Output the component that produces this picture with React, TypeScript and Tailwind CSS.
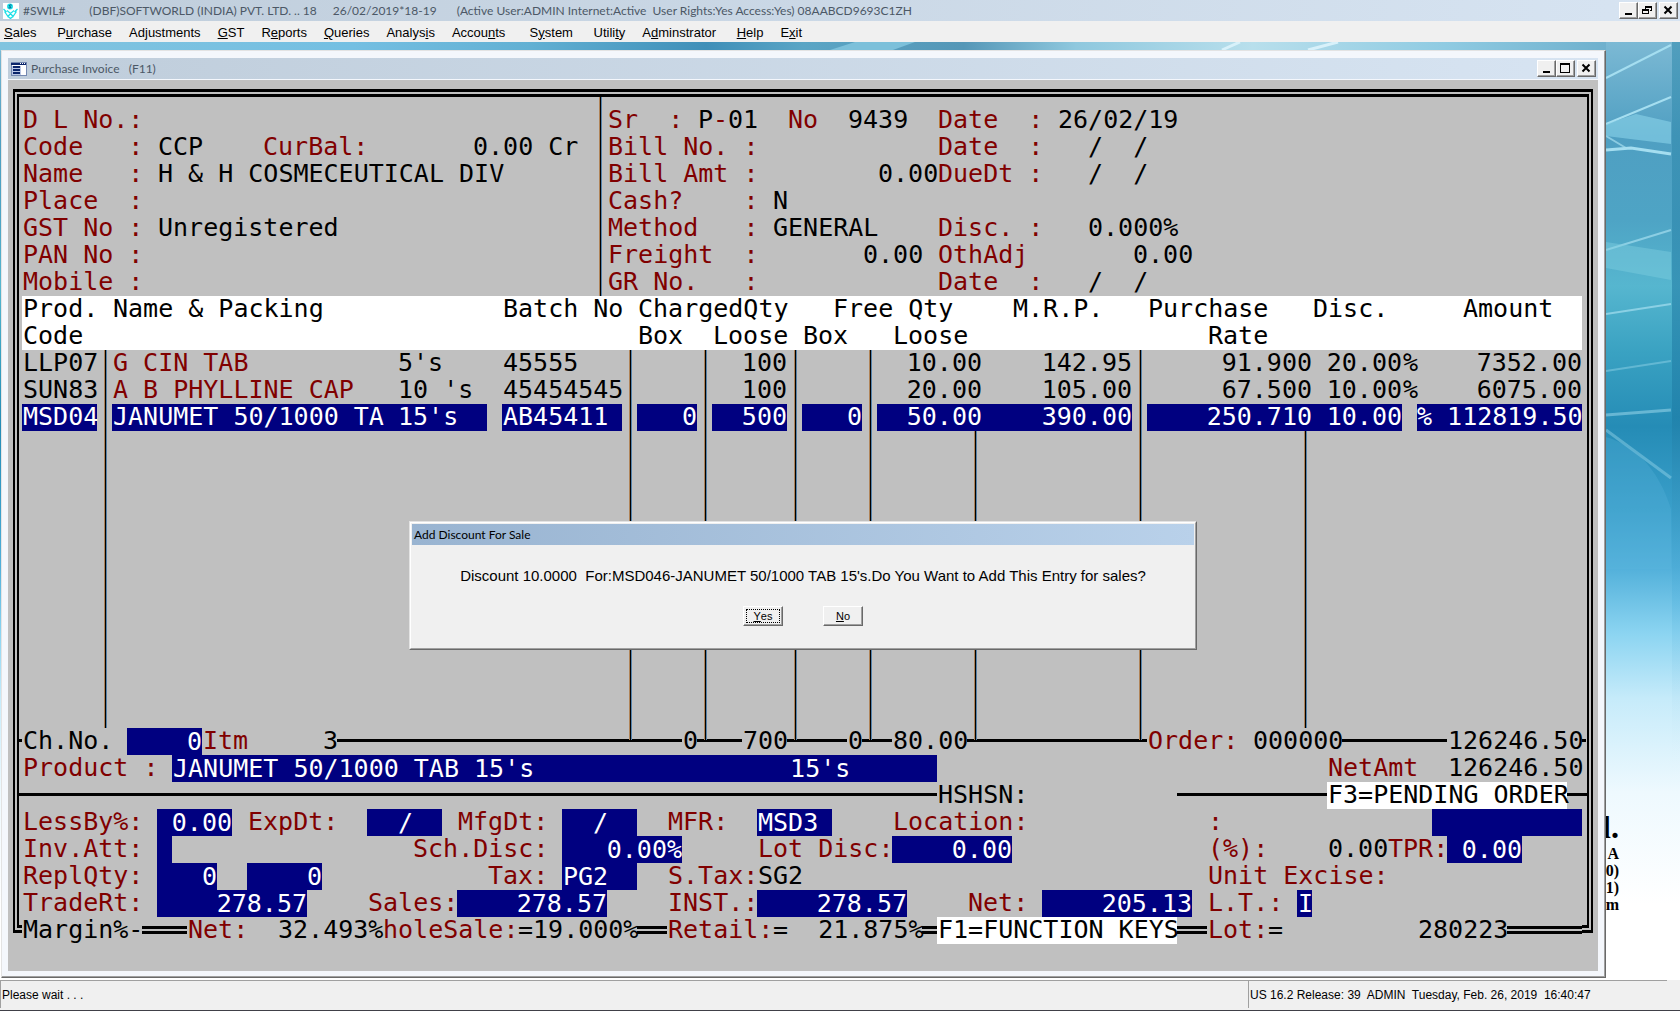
import { ReactNode } from "react";
import clsx from "clsx";

type Tone = "label" | "value" | "mark";

const TONES: Record<Tone, string> = {
  label: "text-[#800000]",
  value: "text-black",
  mark: "bg-white text-black",
};

const COLUMNS = "grid grid-cols-[repeat(104,minmax(0,1fr))]";

// every row of the screen is 104 characters wide
const cell = (at: number, span: number) => ({
  gridColumn: `${at + 1} / span ${span}`,
});

const Row = ({ children, className }: { children?: ReactNode; className?: string }) => (
  <div className={clsx(COLUMNS, "h-[27px] items-stretch", className)}>{children}</div>
);

type TextProps = { at: number; tone?: Tone; children: string };

const Text = ({ at, tone = "value", children }: TextProps) => (
  <span
    className={clsx("row-start-1 pl-px whitespace-pre", TONES[tone])}
    style={cell(at, children.length)}
  >
    {children}
  </span>
);

const Label = ({ at, htmlFor, tone = "label", children }: TextProps & { htmlFor?: string }) =>
  htmlFor ? (
    <label
      htmlFor={htmlFor}
      className={clsx("row-start-1 pl-px whitespace-pre", TONES[tone])}
      style={cell(at, children.length)}
    >
      {children}
    </label>
  ) : (
    <Text at={at} tone={tone}>
      {children}
    </Text>
  );

type FieldProps = {
  id: string;
  at: number;
  span: number;
  value?: string;
  right?: boolean;
  name?: string;
};

const Field = ({ id, at, span, value = "", right, name }: FieldProps) => (
  <input
    id={id}
    aria-label={name}
    defaultValue={value}
    className={clsx(
      "row-start-1 h-[27px] w-full min-w-0 rounded-none bg-[#000080] pb-px text-white outline-none",
      right ? "text-right" : "pl-px"
    )}
    style={cell(at, span)}
  />
);

type RuleProps = { at: number; span: number; double?: boolean; className?: string };

const Rule = ({ at, span, double, className }: RuleProps) => (
  <span
    className={clsx(
      "row-start-1 mb-0.5 self-center border-black",
      double ? "h-2 border-y-[3px]" : "border-t-[3px]",
      className
    )}
    style={cell(at, span)}
  />
);

const BAR = "row-start-1 ml-0.5 w-[3px] justify-self-center border-x border-l-[#b08458] border-r-[#5583ac] bg-black";

const Bar = ({ at, className }: { at: number; className?: string }) => (
  <span className={clsx(BAR, className)} style={cell(at, 1)} />
);

const MENU = [
  ["", "S", "ales "],
  ["P", "u", "rchase"],
  ["Ad", "j", "ustments"],
  ["", "G", "ST"],
  ["R", "e", "ports"],
  ["", "Q", "ueries"],
  ["Analys", "i", "s"],
  ["Accou", "n", "ts"],
  ["  S", "y", "stem"],
  [" Utili", "t", "y"],
  ["A", "d", "minstrator"],
  [" ", "H", "elp"],
  ["E", "x", "it"],
];

const SEPARATORS = [5, 40, 45, 51, 56, 74];

const ITEMS = [
  {
    code: "LLP07",
    name: "G CIN TAB",
    pack: "5's",
    batch: "45555",
    box: "",
    loose: "100",
    freeBox: "",
    free: "10.00",
    mrp: "142.95",
    rate: "91.900",
    disc: "20.00",
    sign: "%",
    amount: "7352.00",
  },
  {
    code: "SUN83",
    name: "A B PHYLLINE CAP",
    pack: "10 's",
    batch: "45454545",
    box: "",
    loose: "100",
    freeBox: "",
    free: "20.00",
    mrp: "105.00",
    rate: "67.500",
    disc: "10.00",
    sign: "%",
    amount: "6075.00",
  },
  {
    code: "MSD04",
    name: "JANUMET 50/1000 TA",
    pack: "15's",
    batch: "AB45411",
    box: "0",
    loose: "500",
    freeBox: "0",
    free: "50.00",
    mrp: "390.00",
    rate: "250.710",
    disc: "10.00",
    sign: "",
    amount: "% 112819.50",
    selected: true,
  },
];

const FIELDS: { key: keyof (typeof ITEMS)[number]; at: number; span: number; right?: boolean }[] = [
  { key: "code", at: 0, span: 5 },
  { key: "name", at: 6, span: 19 },
  { key: "pack", at: 25, span: 6 },
  { key: "batch", at: 32, span: 8 },
  { key: "box", at: 41, span: 4, right: true },
  { key: "loose", at: 46, span: 5, right: true },
  { key: "freeBox", at: 52, span: 4, right: true },
  { key: "free", at: 57, span: 7, right: true },
  { key: "mrp", at: 64, span: 10, right: true },
  { key: "rate", at: 75, span: 11, right: true },
  { key: "disc", at: 86, span: 6, right: true },
  { key: "sign", at: 92, span: 1 },
  { key: "amount", at: 93, span: 11, right: true },
];

const HEADINGS = [
  [
    { at: 0, text: "Prod." },
    { at: 6, text: "Name & Packing" },
    { at: 32, text: "Batch No" },
    { at: 41, text: "ChargedQty" },
    { at: 54, text: "Free Qty" },
    { at: 66, text: "M.R.P." },
    { at: 75, text: "Purchase" },
    { at: 86, text: "Disc." },
    { at: 96, text: "Amount" },
  ],
  [
    { at: 0, text: "Code" },
    { at: 41, text: "Box" },
    { at: 46, text: "Loose" },
    { at: 52, text: "Box" },
    { at: 58, text: "Loose" },
    { at: 79, text: "Rate" },
  ],
];

const WindowButton = ({ label, children, className }: { label: string; children: ReactNode; className?: string }) => (
  <button
    type="button"
    aria-label={label}
    className={clsx(
      "flex h-[17px] w-[19px] items-center justify-center border border-t-white border-l-white border-r-[#696969] border-b-[#696969] bg-[#f0f0f0] shadow-[inset_-1px_-1px_0_#a0a0a0]",
      className
    )}
  >
    <svg width="13" height="11" viewBox="0 0 13 11" fill="none" stroke="#000" shapeRendering="crispEdges">
      {children}
    </svg>
  </button>
);

const MinimizeIcon = <path d="M3 9h7" strokeWidth="2" />;
const RestoreIcon = (
  <>
    <path d="M4 1.5h7M4.5 1v3M10.5 1v5M9 5.5h2M4 2.5h7" />
    <path d="M1 4.5h7M1 5.5h7M1.5 4v5M7.5 4v5M1 8.5h7" />
  </>
);
const MaximizeIcon = <path d="M1 .5h10M1 1.5h10M1.5 1v9M10.5 1v9M1 9.500h10" />;
const CloseIcon = <path d="M2.500 1.500l7 7M9.500 1.500l-7 7" strokeWidth="2" shapeRendering="auto" />;

const Logo = () => (
  <svg width="16" height="16" viewBox="0 0 16 16" className="shrink-0 bg-white" fill="none" stroke="#1fe0e8">
    <circle cx="7" cy="3.500" r="3" fill="#1fe0e8" stroke="none" />
    <path d="M8.500 2.200c-2-1-3 .8-1.500 1.300s1 2-1.300 1.200" stroke="#0a4a80" />
    <path d="M.5 6l3 3M1.500 8.500l3.500 5 2.500-3 2.500 3 3.500-5M14.500 6l-3 3M4 7.500l3.500 3 3.500-3" strokeWidth="1.300" />
    <path d="M5 13.500l2.500 2 2.500-2" strokeWidth="1.300" />
  </svg>
);

const FormIcon = () => (
  <svg width="16" height="14" viewBox="0 0 16 14" className="shrink-0" shapeRendering="crispEdges">
    <rect x="0" y="0" width="16" height="14" fill="#7488b0" />
    <rect x="1" y="3" width="14" height="10" fill="#fff" />
    <rect x="0" y="1" width="15" height="2" fill="#0a246a" />
    <path d="M9 1.500h1M11 1.500h1M13 1.500h1" stroke="#fff" />
    <rect x="1" y="4" width="9" height="9" fill="#b9c6e4" />
    <path d="M2 5h7M2 8h7M2 11h7" stroke="#0a246a" strokeWidth="2" />
  </svg>
);

const Wallpaper = () => (
  <svg
    className="absolute inset-0 h-full w-full"
    viewBox="0 0 1680 938"
    preserveAspectRatio="none"
    aria-hidden="true"
  >
    <defs>
      <linearGradient id="sky" x1="0" y1="0" x2="0" y2="1">
        <stop offset="0" stopColor="#7cb9d4" />
        <stop offset=".1" stopColor="#4f9fc2" />
        <stop offset=".19" stopColor="#4ea4c5" />
        <stop offset=".26" stopColor="#56b6cf" />
        <stop offset=".33" stopColor="#3aa2c2" />
        <stop offset=".41" stopColor="#258cb6" />
        <stop offset=".5" stopColor="#3a9fca" />
        <stop offset=".56" stopColor="#52b0da" />
        <stop offset=".63" stopColor="#8bd4f1" />
        <stop offset=".7" stopColor="#c6ebfa" />
        <stop offset=".8" stopColor="#eef9fe" />
        <stop offset=".92" stopColor="#fff" />
      </linearGradient>
      <linearGradient id="top" x1="0" y1="0" x2="1" y2="0">
        <stop offset="0" stopColor="#82c4df" />
        <stop offset=".22" stopColor="#74bfe2" />
        <stop offset=".33" stopColor="#62b0d3" />
        <stop offset=".44" stopColor="#3f8fb8" />
        <stop offset=".5" stopColor="#5aa5c5" />
        <stop offset=".6" stopColor="#5597b7" />
        <stop offset=".67" stopColor="#8fc8de" />
        <stop offset=".78" stopColor="#b8dfec" />
        <stop offset=".9" stopColor="#8fcbe2" />
        <stop offset="1" stopColor="#6fb0cd" />
      </linearGradient>
      <linearGradient id="edge" x1="0" y1="0" x2="0" y2="1">
        <stop offset="0" stopColor="#3f93b4" stopOpacity=".7" />
        <stop offset=".4" stopColor="#1f7fa8" stopOpacity=".7" />
        <stop offset=".6" stopColor="#4fb0dc" stopOpacity=".3" />
        <stop offset=".8" stopColor="#fff" stopOpacity="0" />
      </linearGradient>
    </defs>
    <rect width="1680" height="938" fill="url(#sky)" />
    <rect width="1606" height="9" fill="url(#top)" />
    <path d="M830 8l25-8h60l-22 8z" fill="#7cc0da" />
    <path d="M1222 8l18-8M1308 8l30-8" stroke="#d8f1fa" strokeWidth="3" />
    <g stroke="#a5def0" fill="none">
      <path d="M1606 36l65-33" strokeWidth="2" />
      <path d="M1606 82l65-27" strokeWidth="2" />
      <path d="M1606 108l25-2 40 6" strokeWidth="3" />
      <path d="M1606 94l20 12" strokeWidth="2" opacity=".7" />
      <path d="M1606 208l65-20" strokeWidth="2" opacity=".7" />
      <path d="M1606 272l65-10" strokeWidth="2" opacity=".7" />
      <path d="M1606 329l65-10" strokeWidth="2" opacity=".4" />
      <path d="M1606 373l65-5" strokeWidth="3" opacity=".5" />
      <path d="M1606 388l65 48" strokeWidth="3" opacity=".4" />
    </g>
    <path d="M1606 82l30-10 35 8v22l-65-8z" fill="#8ad3e9" opacity=".6" />
    <path d="M1606 200l65 10v28l-65-12z" fill="#7fcfe0" opacity=".45" />
    <path d="M1606 395c35 10 55 40 65 72v60h-65z" fill="#5fb9de" opacity=".25" />
    <rect x="1672" y="0" width="8" height="938" fill="url(#edge)" />
  </svg>
);

const Desktop = ({ children }: { children: ReactNode }) => (
  <main className="relative flex-1 overflow-hidden pt-2 pl-px">
    <Wallpaper />
    <div className="relative flex">
      {children}
      <div
        aria-hidden="true"
        className="flex w-[74px] shrink-0 flex-col overflow-hidden pt-[759px] font-['Liberation_Serif',serif] text-base leading-[17px] font-bold text-black"
      >
        <div className="flex w-[13px] flex-col items-end">
          <span className="text-[32px] leading-9">l.</span>
          <span>A</span>
          <span>0)</span>
          <span>1)</span>
          <span>m</span>
        </div>
      </div>
    </div>
  </main>
);

const InvoiceHeader = () => (
  <section>
    <Row>
      <Label at={0}>D L No.:</Label>
      <Bar at={38} className="-mt-[10px]" />
      <Label at={39}>Sr  :</Label>
      <Text at={45}>P</Text>
      <Label at={46}>-</Label>
      <Text at={47}>01</Text>
      <Label at={51}>No</Label>
      <Text at={55}>9439</Text>
      <Label at={61}>Date  :</Label>
      <Text at={69}>26/02/19</Text>
    </Row>
    <Row>
      <Label at={0}>Code   :</Label>
      <Text at={9}>CCP</Text>
      <Label at={16}>CurBal:</Label>
      <Text at={30}>0.00 Cr</Text>
      <Bar at={38} />
      <Label at={39}>Bill No. :</Label>
      <Label at={61}>Date  :</Label>
      <Text at={69}>{"  /  /  "}</Text>
    </Row>
    <Row>
      <Label at={0}>Name   :</Label>
      <Text at={9}>{"H & H COSMECEUTICAL DIV"}</Text>
      <Bar at={38} />
      <Label at={39}>Bill Amt :</Label>
      <Text at={57}>0.00</Text>
      <Label at={61}>DueDt :</Label>
      <Text at={69}>{"  /  /  "}</Text>
    </Row>
    <Row>
      <Label at={0}>Place  :</Label>
      <Bar at={38} />
      <Label at={39}>Cash?    :</Label>
      <Text at={50}>N</Text>
    </Row>
    <Row>
      <Label at={0}>GST No :</Label>
      <Text at={9}>Unregistered</Text>
      <Bar at={38} />
      <Label at={39}>Method   :</Label>
      <Text at={50}>GENERAL</Text>
      <Label at={61}>Disc. :</Label>
      <Text at={71}>0.000%</Text>
    </Row>
    <Row>
      <Label at={0}>PAN No :</Label>
      <Bar at={38} />
      <Label at={39}>Freight  :</Label>
      <Text at={56}>0.00</Text>
      <Label at={61}>OthAdj</Label>
      <Text at={74}>0.00</Text>
    </Row>
    <Row>
      <Label at={0}>Mobile :</Label>
      <Bar at={38} />
      <Label at={39}>GR No.   :</Label>
      <Label at={61}>Date  :</Label>
      <Text at={69}>{"  /  /  "}</Text>
    </Row>
  </section>
);

const ItemTable = () => (
  <table className="block w-full">
    <thead className="block bg-white">
      {HEADINGS.map((line, index) => (
        <tr key={index} className={clsx(COLUMNS, "h-[27px]")}>
          {line.map((heading) => (
            <th
              key={heading.at}
              className="row-start-1 p-0 pl-px text-left font-normal whitespace-pre"
              style={cell(heading.at, heading.text.length)}
            >
              {heading.text}
            </th>
          ))}
        </tr>
      ))}
    </thead>
    <tbody className="block">
      {ITEMS.map((item) => (
        <tr key={item.code} className={clsx(COLUMNS, "h-[27px]")}>
          {FIELDS.map(({ key, at, span, right }) => (
            <td
              key={key}
              className={clsx(
                "row-start-1 whitespace-pre",
                right ? "p-0 text-right" : "p-0 pl-px",
                item.selected && key !== "sign" && "bg-[#000080] text-white",
                !item.selected && key === "name" && "text-[#800000]"
              )}
              style={cell(at, span)}
            >
              {item[key]}
            </td>
          ))}
          {SEPARATORS.map((at) => (
            <td key={at} className={clsx(BAR, "p-0")} style={cell(at, 1)} />
          ))}
        </tr>
      ))}
    </tbody>
  </table>
);

const DiscountDialog = () => (
  <div
    role="dialog"
    aria-labelledby="dialog-title"
    className="absolute top-[90px] left-1/2 ml-px w-[788px] max-w-full -translate-x-1/2 border border-[#e3e3e3] border-r-[#696969] border-b-[#696969] bg-[#f0f0f0] font-['Liberation_Sans',Arial,sans-serif] text-black"
  >
    <div className="border border-white border-r-[#a0a0a0] border-b-[#a0a0a0] p-px">
      <h2
        id="dialog-title"
        className="h-[21px] bg-linear-to-r from-[#99b4d1] to-[#b9d1ea] px-0.5 font-[Lato,sans-serif] text-xs leading-[21px]"
      >
        Add Discount For Sale
      </h2>
      <p className="mt-[22px] text-center text-[15px] leading-[18px] whitespace-pre">
        {"Discount 10.0000  For:MSD046-JANUMET 50/1000 TAB 15's.Do You Want to Add This Entry for sales?"}
      </p>
      <div className="mt-[21px] mb-[21px] flex justify-center gap-10 text-[11px] leading-none">
        <button
          type="button"
          className="h-5 w-10 border border-white border-r-[#696969] border-b-[#696969] bg-[#f0f0f0] p-0.5 shadow-[inset_-1px_-1px_0_#a0a0a0]"
        >
          <span className="flex h-full items-center justify-center border border-dotted border-black">
            <u>Y</u>es
          </span>
        </button>
        <button
          type="button"
          className="h-5 w-10 border border-white border-r-[#696969] border-b-[#696969] bg-[#f0f0f0] shadow-[inset_-1px_-1px_0_#a0a0a0]"
        >
          <u>N</u>o
        </button>
      </div>
    </div>
  </div>
);

const EmptyLines = () => (
  <div className="relative">
    <div className={clsx(COLUMNS, "h-[297px]")}>
      {[5, 85].map((at) => (
        <Bar key={at} at={at} />
      ))}
      {[40, 45, 51, 56, 63, 74].map((at) => (
        <Bar key={at} at={at} className="-mb-3" />
      ))}
    </div>
    <DiscountDialog />
  </div>
);

const InvoiceFooter = () => (
  <section>
    <Row>
      <span className="col-start-1 row-start-1 mb-0.5 -ml-1 w-1 self-center border-t-[3px]" />
      <Label at={0} htmlFor="challan" tone="value">
        Ch.No.
      </Label>
      <Field id="challan" at={7} span={5} value="0" right />
      <Label at={12}>Itm</Label>
      <Text at={20}>3</Text>
      <Rule at={21} span={23} />
      <Text at={44}>0</Text>
      <Rule at={45} span={3} />
      <Text at={48}>700</Text>
      <Rule at={51} span={4} />
      <Text at={55}>0</Text>
      <Rule at={56} span={2} />
      <Text at={58}>80.00</Text>
      <Rule at={63} span={12} />
      <Label at={75}>Order:</Label>
      <Text at={82}>000000</Text>
      <Rule at={88} span={7} />
      <Text at={95}>126246.50</Text>
      <span className="col-start-[104] row-start-1 -mr-1 mb-0.5 w-1 self-center justify-self-end border-t-[3px]" />
    </Row>
    <Row>
      <Label at={0} htmlFor="product">
        Product :
      </Label>
      <Field id="product" at={10} span={51} value="JANUMET 50/1000 TAB 15's                 15's" />
      <Label at={87}>NetAmt</Label>
      <Text at={95}>126246.50</Text>
    </Row>
    <Row>
      <Rule at={0} span={61} className="-ml-1" />
      <Text at={61}>HSHSN:</Text>
      <Rule at={77} span={10} />
      <Text at={87} tone="mark">
        F3=PENDING ORDER
      </Text>
      <Rule at={103} span={1} className="-mr-1.5" />
    </Row>
    <Row>
      <Label at={0} htmlFor="less">
        LessBy%:
      </Label>
      <Field id="less" at={9} span={5} value="0.00" right />
      <Label at={15} htmlFor="expiry">
        ExpDt:
      </Label>
      <Field id="expiry" at={23} span={5} value="  /  " />
      <Label at={29} htmlFor="mfg-date">
        MfgDt:
      </Label>
      <Field id="mfg-date" at={36} span={5} value="  /  " />
      <Label at={43} htmlFor="mfr">
        MFR:
      </Label>
      <Field id="mfr" at={49} span={5} value="MSD3" />
      <Label at={58} htmlFor="location">
        Location:
      </Label>
      <Label at={79}>:</Label>
      <Field id="location" at={94} span={10} />
    </Row>
    <Row>
      <Label at={0} htmlFor="attach">
        Inv.Att:
      </Label>
      <Field id="attach" at={9} span={1} />
      <Label at={26} htmlFor="scheme">
        Sch.Disc:
      </Label>
      <Field id="scheme" at={36} span={8} value="0.00%" right />
      <Label at={49} htmlFor="lot-disc">
        Lot Disc:
      </Label>
      <Field id="lot-disc" at={58} span={8} value="0.00" right />
      <Label at={79}>(%):</Label>
      <Text at={87}>0.00</Text>
      <Label at={91} htmlFor="tpr">
        TPR:
      </Label>
      <Field id="tpr" at={95} span={5} value="0.00" right />
    </Row>
    <Row>
      <Label at={0} htmlFor="repl-box">
        ReplQty:
      </Label>
      <Field id="repl-box" at={9} span={4} value="0" right />
      <Field id="repl-loose" name="ReplQty loose" at={15} span={5} value="0" right />
      <Label at={31} htmlFor="tax">
        Tax:
      </Label>
      <Field id="tax" at={36} span={5} value="PG2" />
      <Label at={43}>S.Tax:</Label>
      <Text at={49}>SG2</Text>
      <Label at={79}>Unit Excise:</Label>
    </Row>
    <Row>
      <Label at={0} htmlFor="trade">
        TradeRt:
      </Label>
      <Field id="trade" at={9} span={10} value="278.57" right />
      <Label at={23} htmlFor="sales">
        Sales:
      </Label>
      <Field id="sales" at={29} span={10} value="278.57" right />
      <Label at={43} htmlFor="inst">
        INST.:
      </Label>
      <Field id="inst" at={49} span={10} value="278.57" right />
      <Label at={63} htmlFor="net">
        Net:
      </Label>
      <Field id="net" at={68} span={10} value="205.13" right />
      <Label at={79} htmlFor="lt">
        L.T.:
      </Label>
      <Field id="lt" at={85} span={1} value="I" />
    </Row>
    <Row className="bg-[#c0c0c0]">
      <Text at={0}>Margin%-</Text>
      <Rule at={8} span={3} double />
      <Label at={11}>Net:</Label>
      <Text at={17}>32.493%</Text>
      <Label at={24}>holeSale:</Label>
      <Text at={33}>=19.000%</Text>
      <Rule at={41} span={2} double />
      <Label at={43}>Retail:</Label>
      <Text at={50}>{"=  21.875%"}</Text>
      <Rule at={60} span={1} double />
      <Text at={61} tone="mark">
        F1=FUNCTION KEYS
      </Text>
      <Rule at={77} span={2} double />
      <Label at={79}>Lot:</Label>
      <Text at={83}>=</Text>
      <Text at={93}>280223</Text>
      <Rule at={99} span={5} double />
    </Row>
  </section>
);

const InvoiceWindow = () => (
  <div className="min-w-0 flex-1 border border-t-[#e3e3e3] border-l-[#e3e3e3] border-r-[#696969] border-b-[#696969] bg-[#f4f7fc] p-1.5 pt-[7px] pr-[7px] shadow-[inset_-1px_-1px_0_#a0a0a0]">
    <div className="flex h-[21px] items-center bg-linear-to-r from-[#bfcddb] to-[#d7e4f2] pr-0.5 pl-[3px] text-[#4c5866]">
      <FormIcon />
      <h1 className="flex-1 pl-1 font-[Lato,sans-serif] text-xs leading-[21px] whitespace-pre">
        {"Purchase Invoice   (F11)"}
      </h1>
      <WindowButton label="Minimize">{MinimizeIcon}</WindowButton>
      <WindowButton label="Maximize">{MaximizeIcon}</WindowButton>
      <WindowButton label="Close" className="ml-0.5">
        {CloseIcon}
      </WindowButton>
    </div>
    <div className="mt-px grid bg-[#c0c0c0] font-['DejaVu_Sans_Mono','Liberation_Mono',monospace] text-[25px] leading-[26px] text-black">
      <div className="col-start-1 row-start-1 mt-[9px] mr-[5px] mb-[38px] ml-[5px] border-x-2 border-y-[3px] border-black p-0.5">
        <div className="h-full border-x-2 border-y-[3px] border-black" />
      </div>
      <div className="col-start-1 row-start-1 min-w-0 py-[27px] pr-4 pl-[14px]">
        <InvoiceHeader />
        <ItemTable />
        <EmptyLines />
        <InvoiceFooter />
      </div>
    </div>
  </div>
);

const App = () => (
  <div className="flex min-h-screen flex-col bg-[#f0f0f0] font-['Liberation_Sans',Arial,sans-serif] text-[13px] text-black">
    <header>
      <div className="flex h-[21px] items-center bg-linear-to-r from-[#bfcddb] to-[#d7e4f2] pr-0.5 pl-[3px] font-[Lato,sans-serif] text-xs text-[#4c5866]">
        <Logo />
        <span className="pl-1">#SWIL#</span>
        <span className="pl-6">(DBF)SOFTWORLD (INDIA) PVT. LTD. .. 18</span>
        <span className="pl-4">26/02/2019*18-19</span>
        <span className="flex-1 pl-5 whitespace-pre">
          {"(Active User:ADMIN Internet:Active  User Rights:Yes Access:Yes) 08AABCD9693C1ZH"}
        </span>
        <WindowButton label="Minimize">{MinimizeIcon}</WindowButton>
        <WindowButton label="Restore">{RestoreIcon}</WindowButton>
        <WindowButton label="Close" className="ml-0.5">
          {CloseIcon}
        </WindowButton>
      </div>
      <nav className="flex h-[21px] items-center gap-[17px] pt-0.5 pl-1">
        {MENU.map(([before, key, after]) => (
          <button key={before + key + after} type="button" className="whitespace-pre">
            {before}
            <u>{key}</u>
            {after}
          </button>
        ))}
      </nav>
    </header>
    <Desktop>
      <InvoiceWindow />
    </Desktop>
    <footer className="flex h-[31px] border-b border-[#404048] pr-[13px] pb-0.5 text-xs">
      <div className="flex flex-1 items-center border-t border-l border-[#a0a0a0] pl-px">Please wait . . .</div>
      <div className="flex w-[419px] items-center border-t border-l border-[#a0a0a0] pl-px whitespace-pre">
        {"US 16.2 Release: 39  ADMIN  Tuesday, Feb. 26, 2019  16:40:47"}
      </div>
    </footer>
  </div>
);

export default App;
